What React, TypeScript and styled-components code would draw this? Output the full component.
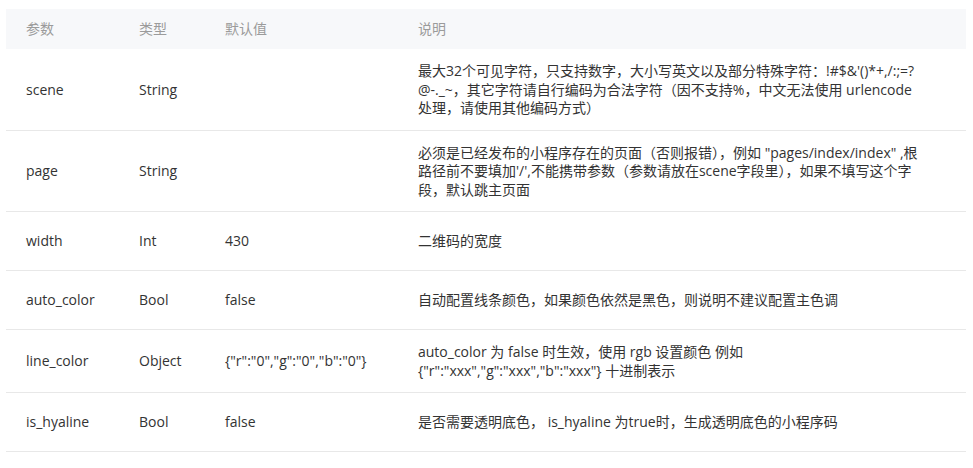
import React from 'react';
import styled, { createGlobalStyle } from 'styled-components';

const GlobalStyle = createGlobalStyle`
  body {
    margin: 0;
    background: #fff;
    font-family: "Open Sans", "Noto Sans CJK SC", sans-serif;
    color: #333;
  }
`;

const Page = styled.div`
  padding: 9px 0 0 6px;
`;

const Table = styled.table`
  width: 960px;
  border-collapse: collapse;
  table-layout: fixed;
  font-size: 14px;
  line-height: 18.5px;
`;

const HeadRow = styled.tr`
  background: #f7f8fa;
`;

const HeadCell = styled.th<{ $width: number }>`
  box-sizing: border-box;
  width: ${(p) => p.$width}px;
  height: 40px;
  padding: 0 20px;
  text-align: left;
  font-weight: normal;
  color: #9b9b9b;
`;

const Row = styled.tr`
  border-bottom: 1px solid #e8e8e8;
`;

const Cell = styled.td`
  box-sizing: border-box;
  height: 59px;
  padding: 13px 20px 12px;
  vertical-align: middle;
  color: #333;
  white-space: nowrap;
`;

const DescCell = styled(Cell)`
  white-space: normal;
`;

interface Param {
  name: string;
  type: string;
  def: string;
  desc: string[];
}

const params: Param[] = [
  {
    name: 'scene',
    type: 'String',
    def: '',
    desc: [
      "最大32个可见字符，只支持数字，大小写英文以及部分特殊字符：!#$&'()*+,/:;=?",
      '@-._~，其它字符请自行编码为合法字符（因不支持%，中文无法使用 urlencode',
      '处理，请使用其他编码方式）',
    ],
  },
  {
    name: 'page',
    type: 'String',
    def: '',
    desc: [
      '必须是已经发布的小程序存在的页面（否则报错），例如 "pages/index/index" ,根',
      "路径前不要填加'/',不能携带参数（参数请放在scene字段里），如果不填写这个字",
      '段，默认跳主页面',
    ],
  },
  { name: 'width', type: 'Int', def: '430', desc: ['二维码的宽度'] },
  {
    name: 'auto_color',
    type: 'Bool',
    def: 'false',
    desc: ['自动配置线条颜色，如果颜色依然是黑色，则说明不建议配置主色调'],
  },
  {
    name: 'line_color',
    type: 'Object',
    def: '{"r":"0","g":"0","b":"0"}',
    desc: ['auto_color 为 false 时生效，使用 rgb 设置颜色 例如', '{"r":"xxx","g":"xxx","b":"xxx"} 十进制表示'],
  },
  {
    name: 'is_hyaline',
    type: 'Bool',
    def: 'false',
    desc: ['是否需要透明底色， is_hyaline 为true时，生成透明底色的小程序码'],
  },
];

const App: React.FC = () => {
  return (
    <>
      <GlobalStyle />
      <Page>
        <Table>
          <thead>
            <HeadRow>
              <HeadCell $width={113}>参数</HeadCell>
              <HeadCell $width={86}>类型</HeadCell>
              <HeadCell $width={193}>默认值</HeadCell>
              <HeadCell $width={568}>说明</HeadCell>
            </HeadRow>
          </thead>
          <tbody>
            {params.map((p) => (
              <Row key={p.name}>
                <Cell>{p.name}</Cell>
                <Cell>{p.type}</Cell>
                <Cell>{p.def}</Cell>
                <DescCell>
                  {p.desc.map((line, i) => (
                    <React.Fragment key={i}>
                      {i > 0 && <br />}
                      {line}
                    </React.Fragment>
                  ))}
                </DescCell>
              </Row>
            ))}
          </tbody>
        </Table>
      </Page>
    </>
  );
};

export default App;
